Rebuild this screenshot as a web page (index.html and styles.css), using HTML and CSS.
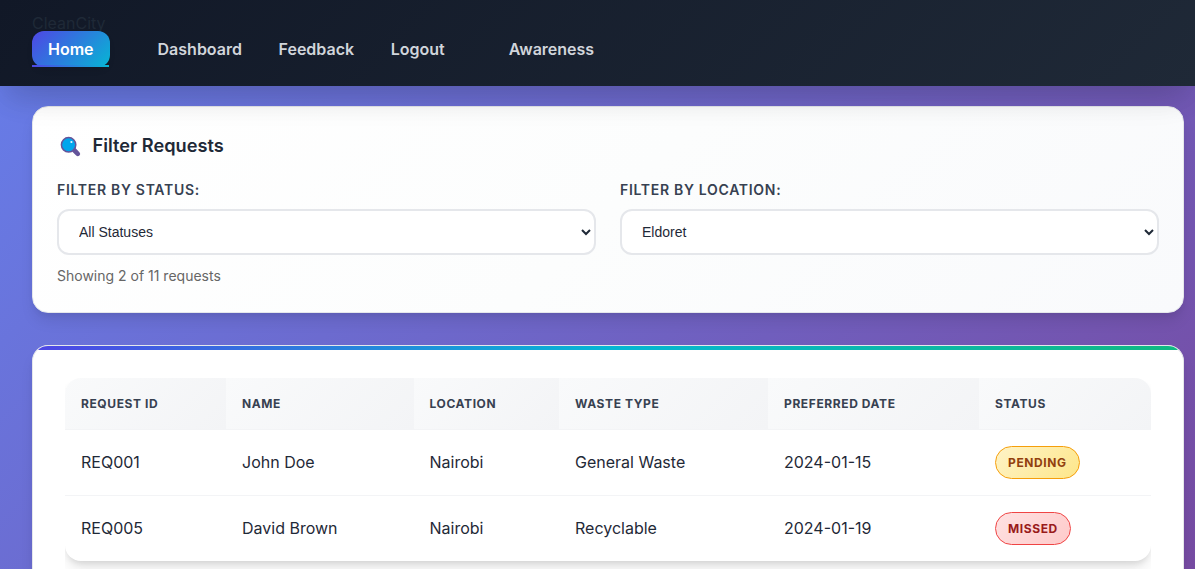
FILE: index.html
```
<!DOCTYPE html>
<html lang="en">
<head>
<meta charset="utf-8">
<title>CleanCity</title>
<link rel="stylesheet" href="styles.css">
</head>
<body>
<header class="header">
  <div class="brand">CleanCity</div>
  <nav class="nav">
    <a class="nav-link active">Home</a>
    <div class="nav-group">
      <a class="nav-link">Dashboard</a>
      <a class="nav-link">Feedback</a>
      <a class="nav-link">Logout</a>
    </div>
    <a class="nav-link">Awareness</a>
  </nav>
</header>
<main class="main">
  <section class="card filters">
    <h3 class="title">
      <svg class="search-icon" viewBox="0 0 22 22" width="22" height="22">
        <path d="M14 14 17.8 17.8" stroke="#64549a" stroke-width="4.6" stroke-linecap="round"/>
        <circle cx="8.6" cy="8.8" r="7.2" fill="#00a6ed" stroke="#64549a" stroke-width="1.5"/>
        <circle cx="11.4" cy="6" r="1.1" fill="#e8f7ff"/>
      </svg>
      <span>Filter Requests</span>
    </h3>
    <div class="fields">
      <div class="field">
        <label class="label" for="status">Filter by Status:</label>
        <select class="select" id="status"><option>All Statuses</option></select>
      </div>
      <div class="field">
        <label class="label" for="location">Filter by Location:</label>
        <select class="select" id="location"><option>Eldoret</option></select>
      </div>
    </div>
    <p class="count">Showing 2 of 11 requests</p>
  </section>
  <section class="card requests">
    <div class="table-wrap">
      <table class="table">
        <colgroup><col class="c1"><col class="c2"><col class="c3"><col class="c4"><col class="c5"><col class="c6"></colgroup>
        <thead>
          <tr><th>Request ID</th><th>Name</th><th>Location</th><th>Waste Type</th><th>Preferred Date</th><th>Status</th></tr>
        </thead>
        <tbody>
          <tr><td>REQ001</td><td>John Doe</td><td>Nairobi</td><td>General Waste</td><td>2024-01-15</td><td><span class="badge pending">Pending</span></td></tr>
          <tr><td>REQ005</td><td>David Brown</td><td>Nairobi</td><td>Recyclable</td><td>2024-01-19</td><td><span class="badge missed">Missed</span></td></tr>
        </tbody>
      </table>
    </div>
  </section>
</main>
</body>
</html>
```
FILE: styles.css
```
* { box-sizing: border-box; margin: 0; padding: 0; }
html { height: 100%; }
body {
  display: flex;
  flex-direction: column;
  height: 100%;
  overflow: hidden;
  font-family: Inter, sans-serif;
  font-size: 16px;
  color: #1f2937;
  background: linear-gradient(135deg, #667eea 0%, #764ba2 100%);
}
.header {
  position: relative;
  z-index: 2;
  flex: none;
  height: 86px;
  padding: 31px 32px 0;
  background: linear-gradient(135deg, #111827 0%, #1f2937 100%);
  box-shadow: 0 20px 25px -5px rgba(0,0,0,.07), 0 14px 40px -12px rgba(0,0,0,.16);
}
.brand { position: absolute; left: 32px; top: 11px; line-height: 24px; }
.nav { position: relative; display: flex; gap: 32px; }
.nav-group { display: flex; gap: 4.6px; }
.nav-link {
  position: relative;
  height: 36px;
  padding: 0 16px;
  line-height: 36px;
  font-weight: 630;
  color: #d1d5db;
  border-radius: 12px;
}
.active {
  color: #fff;
  background: linear-gradient(135deg, #4f46e5, #06b6d4);
  box-shadow: 0 4px 6px -1px rgba(0,0,0,.1);
}
.active::after {
  content: "";
  position: absolute;
  left: 0;
  bottom: 0;
  width: 77px;
  height: 2px;
  background: linear-gradient(135deg, #4f46e5, #06b6d4);
}
.main {
  display: flex;
  flex: 1;
  flex-direction: column;
  min-height: 0;
  padding: 20px 11px 0 32px;
}
.card {
  border: 1px solid #e5e7eb;
  border-radius: 16px;
  box-shadow: 0 10px 15px -3px rgba(0,0,0,.1), 0 4px 6px -2px rgba(0,0,0,.05);
}
.filters {
  flex: none;
  height: 207px;
  padding: 24px;
  margin-bottom: 32px;
  background: linear-gradient(135deg, #fff 0%, #fcfdfd 50%, #f9fafc 100%);
}
.title {
  display: flex;
  align-items: center;
  gap: 10.5px;
  height: 28px;
  padding-left: 3px;
  font-size: 18.2px;
  font-weight: 600;
}
.search-icon { margin-top: 4px; }
.fields { display: grid; grid-template-columns: 1fr 1fr; gap: 24px; margin-top: 20px; }
.label {
  display: block;
  height: 30px;
  line-height: 22px;
  font-size: 14px;
  font-weight: 600;
  letter-spacing: .7px;
  text-transform: uppercase;
  color: #374151;
}
.select {
  display: block;
  width: 100%;
  height: 46px;
  padding: 0 0 0 16px;
  border: 2px solid #e5e7eb;
  border-radius: 12px;
  background: #fff;
  color: #1f2937;
  font: 14px "Liberation Sans", Arial, sans-serif;
}
.count { margin-top: 10px; line-height: 22px; font-size: 14px; color: #666; }
.requests {
  position: relative;
  flex: 1;
  min-height: 0;
  padding: 32px 32px 0;
  border-bottom: 0;
  border-radius: 16px 16px 0 0;
  background: #fff;
  overflow: hidden;
}
.requests::before {
  content: "";
  position: absolute;
  inset: 0 0 auto;
  height: 4px;
  background: linear-gradient(90deg, #4f46e5, #06b6d4, #10b981);
}
.table-wrap { overflow: hidden; padding-bottom: 8px; }
.table {
  width: 1086px;
  table-layout: fixed;
  border-collapse: separate;
  border-spacing: 0;
  border-radius: 16px;
  overflow: hidden;
  box-shadow: 0 10px 15px -3px rgba(0,0,0,.1), 0 4px 6px -2px rgba(0,0,0,.1);
}
.c1 { width: 161px; }
.c2 { width: 187.5px; }
.c3 { width: 145.5px; }
.c4 { width: 209px; }
.c5 { width: 211px; }
.table th {
  height: 52px;
  padding: 0 16px;
  text-align: left;
  font-size: 12px;
  font-weight: 700;
  letter-spacing: .6px;
  text-transform: uppercase;
  color: #374151;
  background: linear-gradient(135deg, #f9fafb, #f3f4f6);
  border-bottom: 1px solid #f3f4f6;
}
.table td { height: 66px; padding: 0 16px 2px; border-bottom: 1px solid #f3f4f6; }
.table td:last-child { padding-bottom: 0; }
.table tbody tr:last-child td { height: 65px; border-bottom: 0; }
.badge {
  display: inline-block;
  height: 33px;
  padding: 0 12px;
  border: 1px solid;
  border-radius: 17px;
  line-height: 31px;
  font-size: 12px;
  font-weight: 700;
  letter-spacing: .6px;
  text-transform: uppercase;
  vertical-align: middle;
}
.pending { color: #92400e; border-color: #f59e0b; background: linear-gradient(135deg, #fef3c7, #fde68a); }
.missed { color: #991b1b; border-color: #ef4444; background: linear-gradient(135deg, #fee2e2, #fecaca); }
```
